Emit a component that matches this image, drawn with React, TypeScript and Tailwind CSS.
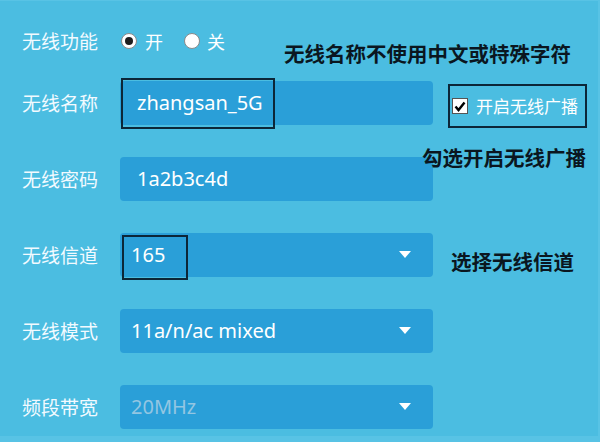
import React from "react";

const font = { fontFamily: '"Noto Sans", "Noto Sans CJK SC", sans-serif' };

function Arrow() {
  return (
    <svg width="12" height="7" viewBox="0 0 12 7" className="absolute right-[22px] top-[18px]">
      <polygon points="0,0 12,0 6,7" fill="#ffffff" />
    </svg>
  );
}

function Label({ children }: { children: React.ReactNode }) {
  return (
    <div className="w-[98px] h-[44px] flex items-center text-[19px] text-[#f2faff] shrink-0 font-['Noto_Sans_CJK_SC',sans-serif]">
      {children}
    </div>
  );
}

export default function App() {
  return (
    <div className="w-[600px] h-[442px] bg-[#4bbde1] relative overflow-hidden border-t border-r-2 border-b-[6px] border-[#58c3e5]" style={font}>
      <div className="flex flex-col pl-[22px] pt-[18px]">
        {/* radio row */}
        <div className="flex items-center h-[44px]">
          <Label>无线功能</Label>
          <div className="flex items-center text-[18px] text-white font-['Noto_Sans_CJK_SC',sans-serif]">
            <span className="w-[16px] h-[16px] rounded-full bg-white border border-[#8a8a8a] flex items-center justify-center ml-[1px]">
              <span className="w-[8px] h-[8px] rounded-full bg-[#1e1e1e]" />
            </span>
            <span className="ml-[8px]">开</span>
            <span className="w-[16px] h-[16px] rounded-full bg-white border border-[#8a8a8a] ml-[21px]" />
            <span className="ml-[7px]">关</span>
          </div>
        </div>

        <div className="flex flex-col gap-[32px] mt-[18px]">
          {/* name */}
          <div className="flex items-start h-[44px]">
            <Label>无线名称</Label>
            <div className="relative w-[313px] h-[44px] rounded-[4px] bg-[#2a9fd8] flex items-center pl-[17px] text-[20px] text-white">
              zhangsan_5G
              <div className="absolute left-[1px] top-[-3px] w-[154px] h-[51px] border-2 border-[#0c2638]" />
            </div>
            <div className="ml-[15px] mt-[3px] w-[139px] h-[44px] border-2 border-[#0c2638] flex items-center pl-[2px]">
              <span className="w-[16px] h-[16px] bg-white border border-[#555] flex items-center justify-center">
                <svg width="12" height="11" viewBox="0 0 12 11">
                  <path d="M1.5 5.5 L4.5 9 L10.5 1.5" stroke="#000" strokeWidth="2.4" fill="none" />
                </svg>
              </span>
              <span className="ml-[8px] text-[17px] text-white font-['Noto_Sans_CJK_SC',sans-serif]">开启无线广播</span>
            </div>
          </div>

          {/* password */}
          <div className="flex items-start h-[44px]">
            <Label>无线密码</Label>
            <div className="w-[313px] h-[44px] rounded-[4px] bg-[#2a9fd8] flex items-center pl-[17px] text-[20px] text-white">
              1a2b3c4d
            </div>
          </div>

          {/* channel */}
          <div className="flex items-start h-[44px]">
            <Label>无线信道</Label>
            <div className="relative w-[313px] h-[44px] rounded-[4px] bg-[#2a9fd8] flex items-center pl-[11px] text-[20px] text-white">
              165
              <div className="absolute left-[2px] top-[2px] w-[66px] h-[45px] border-2 border-[#0c2638]" />
              <Arrow />
            </div>
          </div>

          {/* mode */}
          <div className="flex items-start h-[44px]">
            <Label>无线模式</Label>
            <div className="relative w-[313px] h-[44px] rounded-[4px] bg-[#2a9fd8] flex items-center pl-[11px] text-[20px] text-white">
              11a/n/ac mixed
              <Arrow />
            </div>
          </div>

          {/* bandwidth */}
          <div className="flex items-start h-[44px]">
            <Label>频段带宽</Label>
            <div className="relative w-[313px] h-[44px] rounded-[4px] bg-[#2a9fd8] flex items-center pl-[11px] text-[20px] text-[#93c6e2]">
              20MHz
              <Arrow />
            </div>
          </div>
        </div>
      </div>

      {/* annotations */}
      <div className="absolute left-[284px] top-[42px] text-[20.5px] font-bold text-[#0a1620] leading-none font-['Noto_Sans_CJK_SC',sans-serif] whitespace-nowrap">
        无线名称不使用中文或特殊字符
      </div>
      <div className="absolute left-[422px] top-[146px] text-[20.5px] font-bold text-[#0a1620] leading-none font-['Noto_Sans_CJK_SC',sans-serif] whitespace-nowrap">
        勾选开启无线广播
      </div>
      <div className="absolute left-[451px] top-[250px] text-[20.5px] font-bold text-[#0a1620] leading-none font-['Noto_Sans_CJK_SC',sans-serif] whitespace-nowrap">
        选择无线信道
      </div>
    </div>
  );
}
